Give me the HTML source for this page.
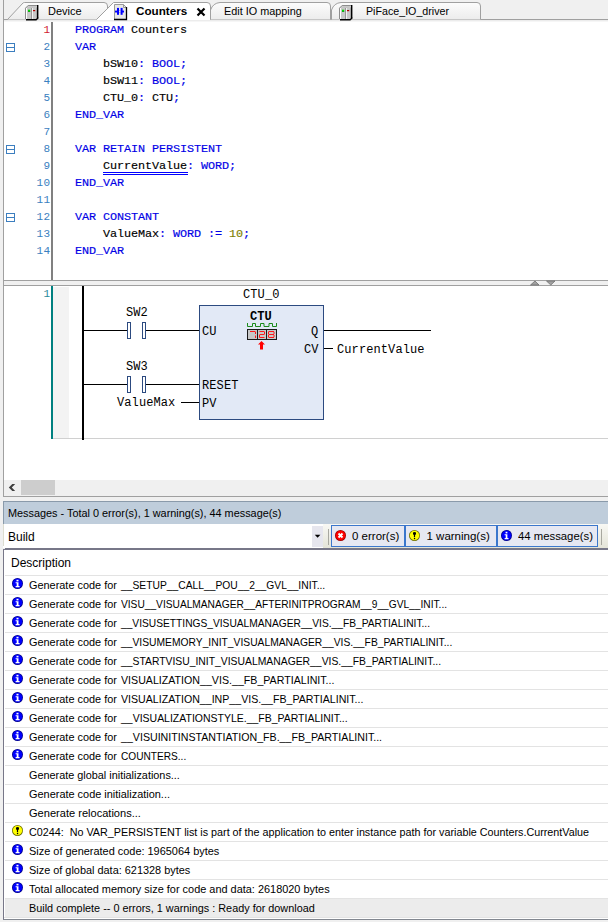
<!DOCTYPE html>
<html><head><meta charset="utf-8">
<style>
*{margin:0;padding:0;box-sizing:border-box}
html,body{width:608px;height:922px;overflow:hidden;background:#f0f0f0;position:relative;font-family:"Liberation Sans",sans-serif}
.a{position:absolute}
.mono{font-family:"Liberation Mono",monospace;font-size:11.8px;letter-spacing:-0.08px;-webkit-text-stroke:0.15px currentColor;line-height:17px;white-space:pre}
.kw{color:#0000e6}
.ui{font-family:"Liberation Sans",sans-serif;white-space:pre;font-size:11px;line-height:14px;color:#000}
.msg{font-family:"Liberation Sans",sans-serif;white-space:pre;font-size:11.5px;line-height:19px;color:#000;transform-origin:0 0}
.lad{font-family:"Liberation Mono",monospace;font-size:12px;letter-spacing:0.1px;line-height:14px;white-space:pre;color:#000}
</style></head><body>

<!-- TAB BAR -->
<svg class="a" style="left:0;top:0" width="608" height="22">
  <defs>
    <linearGradient id="tg" x1="0" y1="0" x2="0" y2="1">
      <stop offset="0" stop-color="#fcfcfc"/><stop offset="1" stop-color="#ececec"/>
    </linearGradient>
  </defs>
  <rect x="0" y="0" width="608" height="22" fill="#f0f0f0"/>
  <line x1="3" y1="19.5" x2="608" y2="19.5" stroke="#a0a0a0"/>
  <!-- PiFace tab -->
  <path d="M331.5 19.5 L331.5 10 Q334 3 341 2.5 L477 2.5 Q480.5 2.5 480.5 6 L480.5 19.5" fill="url(#tg)" stroke="#a0a0a0"/>
  <!-- Edit IO tab -->
  <path d="M210.5 19.5 L210.5 10 Q213 3 220 2.5 L327 2.5 Q330.5 2.5 330.5 6 L330.5 19.5" fill="url(#tg)" stroke="#a0a0a0"/>
  <!-- Device tab -->
  <path d="M7.5 19.5 L23 3 Q23.5 2.5 24.5 2.5 L104 2.5 Q107.5 2.5 107.5 6 L107.5 19.5" fill="url(#tg)" stroke="#a0a0a0"/>
  <!-- Counters active -->
  <path d="M96.5 19.5 L113.5 2.5 L207 2.5 Q210.5 2.5 210.5 6 L210.5 19.5" fill="#ffffff" stroke="#a0a0a0"/>
  <rect x="97" y="19" width="113" height="1" fill="#fff"/>
  <rect x="4" y="20" width="604" height="1" fill="#ececec"/>

  <!-- device icon -->
  <g id="dev">
    <path d="M25 8 L28 5 L38 5 L38 18 L36 20 L26 20 L25 19 Z" fill="#d4d4d4"/>
    <path d="M25.5 19 V8.2 L28.2 5.5 H37" fill="none" stroke="#8c8c8c" stroke-width="1"/>
    <path d="M26.5 8.5 L28.8 6.2 H36.5 L34.8 8.5 Z" fill="#c4c4c4"/>
    <rect x="26" y="8" width="1" height="11" fill="#ffffff"/>
    <rect x="27" y="8" width="4" height="11" fill="#c8c8c8"/>
    <rect x="31" y="8" width="1" height="11" fill="#969696"/>
    <rect x="32" y="8" width="1" height="11" fill="#f2f2f2"/>
    <rect x="33" y="8" width="3" height="11" fill="#c8c8c8"/>
    <path d="M36 8 L37 6.5 L37 18 L36 19 Z" fill="#a8a8a8"/>
    <rect x="37" y="5" width="1.4" height="13.4" fill="#000"/>
    <path d="M26 19 H36 L37.6 17.4 H38.4 V18.4 L36.4 20.4 H26 Z" fill="#000"/>
    <rect x="28" y="9.7" width="2.2" height="2" fill="#00dd00"/>
    <rect x="28" y="11.2" width="2.2" height="0.6" fill="#007a00"/>
    <rect x="33" y="10" width="2.2" height="1.2" fill="#b40000"/>
  </g>
  <use href="#dev" x="314" y="0"/>

  <!-- POU icon -->
  <path d="M114.5 4.5 L123.5 4.5 L126.5 7.5 L126.5 19.5 L114.5 19.5 Z" fill="#e8e8e8" stroke="#9a9a9a"/>
  <path d="M123.5 4.5 L123.5 7.5 L126.5 7.5" fill="none" stroke="#9a9a9a"/>
  <path d="M114 19.5 L126.5 19.5 L126.5 7" fill="none" stroke="#000" stroke-width="1.3"/>
  <rect x="115" y="10.6" width="9" height="1.9" fill="#0000ff"/>
  <rect x="117" y="7.9" width="2" height="6.9" fill="#0000ff"/>
  <rect x="120.6" y="7.9" width="2" height="6.9" fill="#0000ff"/>
  <rect x="119" y="10.6" width="1.6" height="1.9" fill="#e8e8e8"/>
  <!-- close X -->
  <path d="M197.5 8.5 L204.5 15.5 M204.5 8.5 L197.5 15.5" stroke="#000" stroke-width="2.2"/>
</svg>
<div class="a ui" style="left:48px;top:4px">Device</div>
<div class="a ui" style="left:136px;top:4px;font-weight:bold;transform:scaleX(1.06);transform-origin:0 0">Counters</div>
<div class="a ui" style="left:224px;top:4px;transform:scaleX(0.985);transform-origin:0 0">Edit IO mapping</div>
<div class="a ui" style="left:366px;top:4px;transform:scaleX(0.97);transform-origin:0 0">PiFace_IO_driver</div>

<!-- left border -->
<div class="a" style="left:3px;top:0;width:1px;height:497px;background:#a0a0a0"></div>

<!-- CODE EDITOR -->
<div class="a" style="left:4px;top:21px;width:604px;height:259px;background:#fff"></div>
<div class="a" style="left:4px;top:21px;width:604px;height:1px;background:#f6f6f6"></div>
<div class="a" style="left:51px;top:22px;width:2px;height:258px;background:#808080"></div>

<svg class="a" style="left:5px;top:40px" width="12" height="190">
  <g fill="none" stroke="#3c7ebf" stroke-width="1">
    <rect x="1.5" y="3.5" width="8" height="8"/><line x1="1.5" y1="7.5" x2="9.5" y2="7.5"/>
    <rect x="1.5" y="105.5" width="8" height="8"/><line x1="1.5" y1="109.5" x2="9.5" y2="109.5"/>
    <rect x="1.5" y="173.5" width="8" height="8"/><line x1="1.5" y1="177.5" x2="9.5" y2="177.5"/>
  </g>
</svg>

<div class="a mono" style="left:20px;top:22px;width:30.4px;text-align:right;color:#3a80c0;font-size:11px;letter-spacing:0.4px;-webkit-text-stroke:0"><span style="color:#d02030">1</span>
2
3
4
5
6
7
8
9
10
11
12
13
14</div>

<div class="a mono" style="left:75px;top:22px;color:#000"><span class="kw">PROGRAM</span> Counters
<span class="kw">VAR</span>
    bSW10<span class="kw">:</span> <span class="kw">BOOL;</span>
    bSW11<span class="kw">:</span> <span class="kw">BOOL;</span>
    CTU_0<span class="kw">:</span> CTU<span class="kw">;</span>
<span class="kw">END_VAR</span>

<span class="kw">VAR RETAIN PERSISTENT</span>
    CurrentValue<span class="kw">:</span> <span class="kw">WORD;</span>
<span class="kw">END_VAR</span>

<span class="kw">VAR CONSTANT</span>
    ValueMax<span class="kw">:</span> <span class="kw">WORD</span> <span class="kw">:=</span> <span style="color:#808000">10</span><span class="kw">;</span>
<span class="kw">END_VAR</span></div>

<div class="a" style="left:103px;top:172px;width:85px;height:3px;border-top:1px solid #0000ff;border-bottom:1px solid #0000ff"></div>
<!-- SPLITTER -->
<div class="a" style="left:4px;top:280px;width:604px;height:6px;background:#f0f0f0;border-top:1px solid #a0a0a0;border-bottom:1px solid #a0a0a0"></div>
<svg class="a" style="left:528px;top:280px" width="30" height="6">
  <path d="M2.5 5 L7 1 L11 5 Z" fill="#a0a0a0" stroke="#707070" stroke-width="0.8"/>
  <path d="M18.5 1 L27 1 L22.8 5 Z" fill="#a0a0a0" stroke="#707070" stroke-width="0.8"/>
</svg>

<!-- LADDER EDITOR -->
<div class="a" style="left:4px;top:286px;width:604px;height:194px;background:#fff"></div>
<div class="a" style="left:51px;top:286px;width:2px;height:153px;background:#008080"></div>
<div class="a" style="left:53px;top:287px;width:16px;height:151px;background:#f3f3f3"></div>
<div class="a" style="left:53px;top:438px;width:555px;height:1px;background:#d0d0d0"></div>
<div class="a mono" style="left:20px;top:286px;width:30.4px;text-align:right;color:#2a8a9a;font-size:11px;letter-spacing:0.4px;-webkit-text-stroke:0">1</div>

<svg class="a" style="left:0;top:286px" width="608" height="154">
  <g transform="translate(0,-286)">
  <rect x="82" y="286" width="2" height="154" fill="#000"/>
  <!-- rung 1 -->
  <line x1="84" y1="330.5" x2="127" y2="330.5" stroke="#000"/>
  <line x1="146" y1="330.5" x2="199" y2="330.5" stroke="#000"/>
  <rect x="127.5" y="322.5" width="3" height="16" fill="#fff" stroke="#2c4a80"/>
  <rect x="142.5" y="322.5" width="3" height="16" fill="#fff" stroke="#2c4a80"/>
  <!-- rung 2 -->
  <line x1="84" y1="384.5" x2="127" y2="384.5" stroke="#000"/>
  <line x1="146" y1="384.5" x2="199" y2="384.5" stroke="#000"/>
  <rect x="127.5" y="376.5" width="3" height="16" fill="#fff" stroke="#2c4a80"/>
  <rect x="142.5" y="376.5" width="3" height="16" fill="#fff" stroke="#2c4a80"/>
  <line x1="181" y1="402.5" x2="199" y2="402.5" stroke="#000"/>
  <!-- block -->
  <rect x="199.5" y="305.5" width="124" height="114" fill="#e2e9f6" stroke="#2c4a80"/>
  <line x1="324" y1="330.5" x2="431" y2="330.5" stroke="#000"/>
  <line x1="324" y1="348.5" x2="333" y2="348.5" stroke="#000"/>
  <!-- CTU icon -->
  <path d="M247.5 323 V326.5 H252.5 V323.5 H255.5 V326.5 H260.5 V323.5 H264 V326.5 H269 V323.5 H272.5 V326.5 H276.5 V323" fill="none" stroke="#1a8a1a" stroke-width="1"/>
  <rect x="247.5" y="329.5" width="29" height="10" fill="#c8c8c8" stroke="#1a1a1a"/>
  <line x1="257.5" y1="329.5" x2="257.5" y2="339.5" stroke="#1a1a1a"/>
  <line x1="266.5" y1="329.5" x2="266.5" y2="339.5" stroke="#1a1a1a"/>
  <g fill="none" stroke="#ff1a1a" stroke-width="1">
    <path d="M250 331.5 H255.5 M255.5 332 V334 M255.5 335.5 V338"/>
    <path d="M259.5 331.5 H264.5 M264.5 332 V334 M259.5 334.5 H264.5 M259.5 335 V337.5 M259.5 337.5 H264.5"/>
    <path d="M268.5 331.5 H274 M268.5 334.5 H274 M268.5 337.5 H274 M268.5 332 V334 M274 332 V334 M268.5 335 V337 M274 335 V337"/>
  </g>
  <path d="M261.5 341 L265 344.5 L263 344.5 L263 349.5 L260 349.5 L260 344.5 L258 344.5 Z" fill="#ff0000"/>
  </g>
</svg>
<div class="a lad" style="left:126px;top:306px">SW2</div>
<div class="a lad" style="left:126px;top:360px">SW3</div>
<div class="a lad" style="left:117px;top:396px">ValueMax</div>
<div class="a lad" style="left:243px;top:288px">CTU_0</div>
<div class="a lad" style="left:250px;top:310px;font-weight:bold">CTU</div>
<div class="a lad" style="left:202px;top:325px">CU</div>
<div class="a lad" style="left:202px;top:379px">RESET</div>
<div class="a lad" style="left:202px;top:397px">PV</div>
<div class="a lad" style="left:311px;top:325px">Q</div>
<div class="a lad" style="left:304px;top:343px">CV</div>
<div class="a lad" style="left:337px;top:343px">CurrentValue</div>

<!-- H SCROLLBAR -->
<div class="a" style="left:4px;top:480px;width:604px;height:16px;background:#f0f0f0"></div>
<div class="a" style="left:21px;top:480px;width:34px;height:15px;background:#cdcdcd"></div>
<svg class="a" style="left:6px;top:482px" width="12" height="12"><path d="M6.3 2 H9.2 L5.8 5.5 L9.2 9 H6.3 L2.8 5.5 Z" fill="#404040"/></svg>
<div class="a" style="left:3px;top:496px;width:605px;height:1px;background:#a0a0a0"></div>

<!-- MESSAGES -->
<div class="a" style="left:3px;top:501px;width:605px;height:23px;background:#bfcddb;border-top:1px solid #8a9aaa;border-left:1px solid #8a9aaa"></div>
<div class="a msg" style="left:8px;top:504px;transform:scaleX(0.945)">Messages - Total 0 error(s), 1 warning(s), 44 message(s)</div>

<!-- toolbar row -->
<div class="a" style="left:3px;top:524px;width:605px;height:24px;background:#fff"></div>
<div class="a msg" style="left:8px;top:528px;font-size:12px">Build</div>
<div class="a" style="left:312px;top:526px;width:11px;height:21px;background:#e6e6ee"></div>
<svg class="a" style="left:313px;top:532px" width="10" height="8"><path d="M1.8 2.8 L7.4 2.8 L4.6 5.8 Z" fill="#000"/></svg>
<div class="a" style="left:323px;top:524px;width:285px;height:24px;background:linear-gradient(#f8f8f4,#e4e4d8)"></div>
<div class="a" style="left:328px;top:529px;width:1px;height:16px;background:#a8a8a0"></div>
<div class="a" style="left:601px;top:529px;width:1px;height:16px;background:#a8a8a0"></div>
<div class="a" style="left:331px;top:525px;width:74px;height:22px;background:#e6e8f2;border:1px solid #3b77cc"></div>
<div class="a" style="left:405px;top:525px;width:92px;height:22px;background:#e6e8f2;border:1px solid #3b77cc"></div>
<div class="a" style="left:497px;top:525px;width:101px;height:22px;background:#e6e8f2;border:1px solid #3b77cc"></div>
<svg class="a" style="left:335px;top:530px" width="11" height="11" viewBox="0 0 11 11"><circle cx="5.5" cy="5.5" r="5.5" fill="#a00000"/><circle cx="5.5" cy="5.5" r="4.7" fill="#ff0000"/><path d="M3.5 3.5 L7.5 7.5 M7.5 3.5 L3.5 7.5" stroke="#fff" stroke-width="1.9"/></svg>
<svg class="a" style="left:409px;top:530px" width="11" height="11" viewBox="0 0 11 11"><circle cx="5.5" cy="5.5" r="5.5" fill="#707000"/><circle cx="5.5" cy="5.5" r="4.7" fill="#ffff00"/><path d="M4 2.6 Q5.5 1.6 7 2.6 V4.2 L6.1 5 V7.2 H4.9 V5 L4 4.2 Z" fill="#000"/><rect x="4.9" y="8" width="1.3" height="1.2" fill="#000"/></svg>
<svg class="a" style="left:501px;top:530px" width="11" height="11" viewBox="0 0 11 11"><circle cx="5.5" cy="5.5" r="5.5" fill="#000090"/><circle cx="5.5" cy="5.5" r="4.7" fill="#0000ff"/><rect x="4.6" y="1.8" width="1.8" height="1.6" fill="#fff"/><path d="M3.6 4.2h2.8v3.9h1.1v1.1H3.6V8.1h1.1V5.3H3.6z" fill="#fff"/></svg>
<div class="a msg" style="left:352px;top:527px">0 error(s)</div>
<div class="a msg" style="left:426.5px;top:527px">1 warning(s)</div>
<div class="a msg" style="left:517.5px;top:527px;transform:scaleX(0.985)">44 message(s)</div>
<div class="a" style="left:5px;top:548px;width:603px;height:1px;background:#777788"></div><div class="a" style="left:3px;top:549px;width:605px;height:1px;background:#777788"></div><div class="a" style="left:3px;top:524px;width:1px;height:22px;background:#dcdcd0"></div>

<!-- list -->
<div class="a" style="left:3px;top:550px;width:605px;height:370px;background:#fff;border-left:1px solid #777788;border-bottom:1px solid #828790"></div>
<div class="a msg" style="left:11px;top:554px;font-size:12px">Description</div>
<div class="a" style="left:5px;top:575px;width:603px;height:19px;border-top:1px solid #e3e3e3;"></div>
<svg class="a" style="left:12px;top:578px" width="11" height="11" viewBox="0 0 11 11"><circle cx="5.5" cy="5.5" r="5.5" fill="#000090"/><circle cx="5.5" cy="5.5" r="4.7" fill="#0000ff"/><rect x="4.5" y="1.8" width="2" height="1.6" fill="#fff"/><path d="M3.6 4.2h2.9v3.9h1.1v1.1H3.6V8.1h1.1V5.3H3.6z" fill="#fff"/></svg>
<div class="a msg" style="left:29px;top:576px;transform:scaleX(0.9478)">Generate code for</div>
<div class="a msg" style="left:120.5px;top:576px;transform:scaleX(0.8949)">__SETUP__CALL__POU__2__GVL__INIT...</div>
<div class="a" style="left:5px;top:594px;width:603px;height:19px;border-top:1px solid #e3e3e3;"></div>
<svg class="a" style="left:12px;top:597px" width="11" height="11" viewBox="0 0 11 11"><circle cx="5.5" cy="5.5" r="5.5" fill="#000090"/><circle cx="5.5" cy="5.5" r="4.7" fill="#0000ff"/><rect x="4.5" y="1.8" width="2" height="1.6" fill="#fff"/><path d="M3.6 4.2h2.9v3.9h1.1v1.1H3.6V8.1h1.1V5.3H3.6z" fill="#fff"/></svg>
<div class="a msg" style="left:29px;top:595px;transform:scaleX(0.9478)">Generate code for</div>
<div class="a msg" style="left:120.5px;top:595px;transform:scaleX(0.8857)">VISU__VISUALMANAGER__AFTERINITPROGRAM__9__GVL__INIT...</div>
<div class="a" style="left:5px;top:613px;width:603px;height:19px;border-top:1px solid #e3e3e3;"></div>
<svg class="a" style="left:12px;top:616px" width="11" height="11" viewBox="0 0 11 11"><circle cx="5.5" cy="5.5" r="5.5" fill="#000090"/><circle cx="5.5" cy="5.5" r="4.7" fill="#0000ff"/><rect x="4.5" y="1.8" width="2" height="1.6" fill="#fff"/><path d="M3.6 4.2h2.9v3.9h1.1v1.1H3.6V8.1h1.1V5.3H3.6z" fill="#fff"/></svg>
<div class="a msg" style="left:29px;top:614px;transform:scaleX(0.9478)">Generate code for</div>
<div class="a msg" style="left:120.5px;top:614px;transform:scaleX(0.8882)">__VISUSETTINGS_VISUALMANAGER__VIS.__FB_PARTIALINIT...</div>
<div class="a" style="left:5px;top:632px;width:603px;height:19px;border-top:1px solid #e3e3e3;"></div>
<svg class="a" style="left:12px;top:635px" width="11" height="11" viewBox="0 0 11 11"><circle cx="5.5" cy="5.5" r="5.5" fill="#000090"/><circle cx="5.5" cy="5.5" r="4.7" fill="#0000ff"/><rect x="4.5" y="1.8" width="2" height="1.6" fill="#fff"/><path d="M3.6 4.2h2.9v3.9h1.1v1.1H3.6V8.1h1.1V5.3H3.6z" fill="#fff"/></svg>
<div class="a msg" style="left:29px;top:633px;transform:scaleX(0.9478)">Generate code for</div>
<div class="a msg" style="left:120.5px;top:633px;transform:scaleX(0.8954)">__VISUMEMORY_INIT_VISUALMANAGER__VIS.__FB_PARTIALINIT...</div>
<div class="a" style="left:5px;top:651px;width:603px;height:19px;border-top:1px solid #e3e3e3;"></div>
<svg class="a" style="left:12px;top:654px" width="11" height="11" viewBox="0 0 11 11"><circle cx="5.5" cy="5.5" r="5.5" fill="#000090"/><circle cx="5.5" cy="5.5" r="4.7" fill="#0000ff"/><rect x="4.5" y="1.8" width="2" height="1.6" fill="#fff"/><path d="M3.6 4.2h2.9v3.9h1.1v1.1H3.6V8.1h1.1V5.3H3.6z" fill="#fff"/></svg>
<div class="a msg" style="left:29px;top:652px;transform:scaleX(0.9478)">Generate code for</div>
<div class="a msg" style="left:120.5px;top:652px;transform:scaleX(0.9012)">__STARTVISU_INIT_VISUALMANAGER__VIS.__FB_PARTIALINIT...</div>
<div class="a" style="left:5px;top:670px;width:603px;height:19px;border-top:1px solid #e3e3e3;"></div>
<svg class="a" style="left:12px;top:673px" width="11" height="11" viewBox="0 0 11 11"><circle cx="5.5" cy="5.5" r="5.5" fill="#000090"/><circle cx="5.5" cy="5.5" r="4.7" fill="#0000ff"/><rect x="4.5" y="1.8" width="2" height="1.6" fill="#fff"/><path d="M3.6 4.2h2.9v3.9h1.1v1.1H3.6V8.1h1.1V5.3H3.6z" fill="#fff"/></svg>
<div class="a msg" style="left:29px;top:671px;transform:scaleX(0.9478)">Generate code for</div>
<div class="a msg" style="left:120.5px;top:671px;transform:scaleX(0.9252)">VISUALIZATION__VIS.__FB_PARTIALINIT...</div>
<div class="a" style="left:5px;top:689px;width:603px;height:19px;border-top:1px solid #e3e3e3;"></div>
<svg class="a" style="left:12px;top:692px" width="11" height="11" viewBox="0 0 11 11"><circle cx="5.5" cy="5.5" r="5.5" fill="#000090"/><circle cx="5.5" cy="5.5" r="4.7" fill="#0000ff"/><rect x="4.5" y="1.8" width="2" height="1.6" fill="#fff"/><path d="M3.6 4.2h2.9v3.9h1.1v1.1H3.6V8.1h1.1V5.3H3.6z" fill="#fff"/></svg>
<div class="a msg" style="left:29px;top:690px;transform:scaleX(0.9478)">Generate code for</div>
<div class="a msg" style="left:120.5px;top:690px;transform:scaleX(0.9229)">VISUALIZATION__INP__VIS.__FB_PARTIALINIT...</div>
<div class="a" style="left:5px;top:708px;width:603px;height:19px;border-top:1px solid #e3e3e3;"></div>
<svg class="a" style="left:12px;top:711px" width="11" height="11" viewBox="0 0 11 11"><circle cx="5.5" cy="5.5" r="5.5" fill="#000090"/><circle cx="5.5" cy="5.5" r="4.7" fill="#0000ff"/><rect x="4.5" y="1.8" width="2" height="1.6" fill="#fff"/><path d="M3.6 4.2h2.9v3.9h1.1v1.1H3.6V8.1h1.1V5.3H3.6z" fill="#fff"/></svg>
<div class="a msg" style="left:29px;top:709px;transform:scaleX(0.9478)">Generate code for</div>
<div class="a msg" style="left:120.5px;top:709px;transform:scaleX(0.9116)">__VISUALIZATIONSTYLE.__FB_PARTIALINIT...</div>
<div class="a" style="left:5px;top:727px;width:603px;height:19px;border-top:1px solid #e3e3e3;"></div>
<svg class="a" style="left:12px;top:730px" width="11" height="11" viewBox="0 0 11 11"><circle cx="5.5" cy="5.5" r="5.5" fill="#000090"/><circle cx="5.5" cy="5.5" r="4.7" fill="#0000ff"/><rect x="4.5" y="1.8" width="2" height="1.6" fill="#fff"/><path d="M3.6 4.2h2.9v3.9h1.1v1.1H3.6V8.1h1.1V5.3H3.6z" fill="#fff"/></svg>
<div class="a msg" style="left:29px;top:728px;transform:scaleX(0.9478)">Generate code for</div>
<div class="a msg" style="left:120.5px;top:728px;transform:scaleX(0.9250)">__VISUINITINSTANTIATION_FB.__FB_PARTIALINIT...</div>
<div class="a" style="left:5px;top:746px;width:603px;height:19px;border-top:1px solid #e3e3e3;"></div>
<svg class="a" style="left:12px;top:749px" width="11" height="11" viewBox="0 0 11 11"><circle cx="5.5" cy="5.5" r="5.5" fill="#000090"/><circle cx="5.5" cy="5.5" r="4.7" fill="#0000ff"/><rect x="4.5" y="1.8" width="2" height="1.6" fill="#fff"/><path d="M3.6 4.2h2.9v3.9h1.1v1.1H3.6V8.1h1.1V5.3H3.6z" fill="#fff"/></svg>
<div class="a msg" style="left:29px;top:747px;transform:scaleX(0.9478)">Generate code for</div>
<div class="a msg" style="left:120.5px;top:747px;transform:scaleX(0.8799)">COUNTERS...</div>
<div class="a" style="left:5px;top:765px;width:603px;height:19px;border-top:1px solid #e3e3e3;"></div>
<div class="a msg" style="left:29px;top:766px;transform:scaleX(0.9440)">Generate global initializations...</div>
<div class="a" style="left:5px;top:784px;width:603px;height:19px;border-top:1px solid #e3e3e3;"></div>
<div class="a msg" style="left:29px;top:785px;transform:scaleX(0.9505)">Generate code initialization...</div>
<div class="a" style="left:5px;top:803px;width:603px;height:19px;border-top:1px solid #e3e3e3;"></div>
<div class="a msg" style="left:29px;top:804px;transform:scaleX(0.9619)">Generate relocations...</div>
<div class="a" style="left:5px;top:822px;width:603px;height:19px;border-top:1px solid #e3e3e3;"></div>
<svg class="a" style="left:12px;top:825px" width="11" height="11" viewBox="0 0 11 11"><circle cx="5.5" cy="5.5" r="5.5" fill="#707000"/><circle cx="5.5" cy="5.5" r="4.7" fill="#ffff00"/><path d="M4 2.6 Q5.5 1.6 7 2.6 V4.2 L6.1 5 V7.2 H4.9 V5 L4 4.2 Z" fill="#000"/><rect x="4.9" y="8" width="1.3" height="1.2" fill="#000"/></svg>
<div class="a msg" style="left:29px;top:823px;transform:scaleX(0.9361)">C0244:  No VAR_PERSISTENT list is part of the application to enter instance path for variable Counters.CurrentValue</div>
<div class="a" style="left:5px;top:841px;width:603px;height:19px;border-top:1px solid #e3e3e3;"></div>
<svg class="a" style="left:12px;top:844px" width="11" height="11" viewBox="0 0 11 11"><circle cx="5.5" cy="5.5" r="5.5" fill="#000090"/><circle cx="5.5" cy="5.5" r="4.7" fill="#0000ff"/><rect x="4.5" y="1.8" width="2" height="1.6" fill="#fff"/><path d="M3.6 4.2h2.9v3.9h1.1v1.1H3.6V8.1h1.1V5.3H3.6z" fill="#fff"/></svg>
<div class="a msg" style="left:29px;top:842px;transform:scaleX(0.9508)">Size of generated code: 1965064 bytes</div>
<div class="a" style="left:5px;top:860px;width:603px;height:19px;border-top:1px solid #e3e3e3;"></div>
<svg class="a" style="left:12px;top:863px" width="11" height="11" viewBox="0 0 11 11"><circle cx="5.5" cy="5.5" r="5.5" fill="#000090"/><circle cx="5.5" cy="5.5" r="4.7" fill="#0000ff"/><rect x="4.5" y="1.8" width="2" height="1.6" fill="#fff"/><path d="M3.6 4.2h2.9v3.9h1.1v1.1H3.6V8.1h1.1V5.3H3.6z" fill="#fff"/></svg>
<div class="a msg" style="left:29px;top:861px;transform:scaleX(0.9480)">Size of global data: 621328 bytes</div>
<div class="a" style="left:5px;top:879px;width:603px;height:19px;border-top:1px solid #e3e3e3;"></div>
<svg class="a" style="left:12px;top:882px" width="11" height="11" viewBox="0 0 11 11"><circle cx="5.5" cy="5.5" r="5.5" fill="#000090"/><circle cx="5.5" cy="5.5" r="4.7" fill="#0000ff"/><rect x="4.5" y="1.8" width="2" height="1.6" fill="#fff"/><path d="M3.6 4.2h2.9v3.9h1.1v1.1H3.6V8.1h1.1V5.3H3.6z" fill="#fff"/></svg>
<div class="a msg" style="left:29px;top:880px;transform:scaleX(0.9499)">Total allocated memory size for code and data: 2618020 bytes</div>
<div class="a" style="left:5px;top:898px;width:603px;height:19px;border-top:1px solid #e3e3e3; background:#ececec;"></div>
<div class="a msg" style="left:29px;top:899px;transform:scaleX(0.9431)">Build complete -- 0 errors, 1 warnings : Ready for download</div>
<div class="a" style="left:4px;top:917px;width:604px;height:1px;background:#e3e3e3"></div>

</body></html>
